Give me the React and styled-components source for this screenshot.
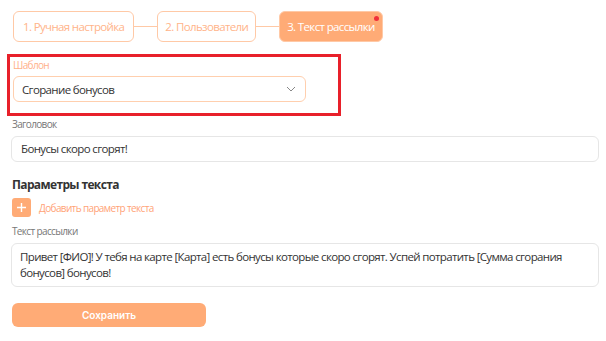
import React from 'react'
import styled, { createGlobalStyle } from 'styled-components'

const GlobalStyle = createGlobalStyle`
    html, body {
        margin: 0;
        padding: 0;
        background: #fff;
        font-family: "Open Sans", "Noto Sans", sans-serif;
        letter-spacing: -0.04em;
    }
`;

const Page = styled.div`
    width: 606px;
    height: 341px;
    box-sizing: border-box;
    padding: 11px 7px 0 12px;
    display: flex;
    flex-direction: column;
`;

const Steps = styled.div`
    display: flex;
    align-items: center;
    margin-left: 1px;
`;

const Step = styled.div`
    position: relative;
    height: 31px;
    box-sizing: border-box;
    padding: 0 ${props => props.pad || 8}px;
    display: flex;
    align-items: center;
    border-radius: 6px;
    border: 1px solid #ffc9a6;
    background: ${props => props.active ? '#ffab76' : '#fff'};
    color: ${props => props.active ? '#fff' : '#ffb48a'};
    font-size: 11.5px;
    white-space: nowrap;
`;

const Dot = styled.span`
    position: absolute;
    top: 4px;
    right: 3px;
    width: 5px;
    height: 5px;
    border-radius: 50%;
    background: #f0303a;
`;

const Connector = styled.div`
    width: 23px;
    height: 1px;
    background: #ffc9a6;
`;

const Highlight = styled.div`
    margin: 12px 0 0 -5px;
    width: 334px;
    height: 62px;
    box-sizing: border-box;
    border: 3px solid #e8202a;
    padding: 2px 0 0 3px;
`;

const Label = styled.div`
    font-size: 10px;
    line-height: 13px;
    color: ${props => props.accent ? '#ffb08a' : '#777'};
    margin-bottom: ${props => props.gap || 5}px;
`;

const Select = styled.div`
    width: 293px;
    height: 26px;
    box-sizing: border-box;
    border: 1px solid #ffcfae;
    border-radius: 6px;
    display: flex;
    align-items: center;
    justify-content: space-between;
    padding: 0 9px 0 8px;
    font-size: 11.5px;
    color: #333;
`;

const Field = styled.div`
    width: 588px;
    margin-left: -1px;
    box-sizing: border-box;
    border: 1px solid #e6e6e6;
    border-radius: 6px;
    padding: ${props => props.multi ? '5px 8px' : '0 9px'};
    height: ${props => props.multi ? '44px' : '26px'};
    display: flex;
    align-items: ${props => props.multi ? 'flex-start' : 'center'};
    font-size: 11.5px;
    line-height: 16px;
    color: #333;
`;

const Group = styled.div`
    margin-top: ${props => props.top}px;
`;

const Heading = styled.div`
    margin-top: 14px;
    font-size: 12px;
    font-weight: 700;
    color: #333;
`;

const AddRow = styled.div`
    margin-top: 5px;
    display: flex;
    align-items: center;
    gap: 8px;
`;

const PlusBox = styled.div`
    width: 19px;
    height: 19px;
    border-radius: 3px;
    background: #ffab76;
    display: flex;
    align-items: center;
    justify-content: center;
`;

const AddText = styled.span`
    font-size: 10px;
    color: #ffa377;
`;

const SaveButton = styled.div`
    margin-top: 16px;
    width: 194px;
    height: 24px;
    border-radius: 6px;
    background: #ffab76;
    color: #fff;
    font-family: Inter, "Noto Sans", sans-serif;
    letter-spacing: 0;
    font-weight: 600;
    font-size: 10px;
    display: flex;
    align-items: center;
    justify-content: center;
`;

export default function App() {
    return (
        <>
            <GlobalStyle />
            <Page>
                <Steps>
                    <Step pad={9}>1. Ручная настройка</Step>
                    <Connector />
                    <Step pad={7}>2. Пользователи</Step>
                    <Connector />
                    <Step active pad={7}>3. Текст рассылки<Dot /></Step>
                </Steps>

                <Highlight>
                    <Label accent gap={4}>Шаблон</Label>
                    <Select>
                        <span>Сгорание бонусов</span>
                        <svg width="10" height="6" viewBox="0 0 10 6" fill="none">
                            <path d="M1 1l4 4 4-4" stroke="#888" strokeWidth="1" />
                        </svg>
                    </Select>
                </Highlight>

                <Group top={2}>
                    <Label gap={5}>Заголовок</Label>
                    <Field>Бонусы скоро сгорят!</Field>
                </Group>

                <Heading>Параметры текста</Heading>
                <AddRow>
                    <PlusBox>
                        <svg width="11" height="11" viewBox="0 0 11 11">
                            <path d="M5.5 1v9M1 5.5h9" stroke="#fff" strokeWidth="1.4" />
                        </svg>
                    </PlusBox>
                    <AddText>Добавить параметр текста</AddText>
                </AddRow>

                <Group top={8}>
                    <Label gap={5}>Текст рассылки</Label>
                    <Field multi>
                        Привет [ФИО]! У тебя на карте [Карта] есть бонусы которые скоро сгорят. Успей потратить [Сумма сгорания бонусов] бонусов!
                    </Field>
                </Group>

                <SaveButton>Сохранить</SaveButton>
            </Page>
        </>
    )
}
